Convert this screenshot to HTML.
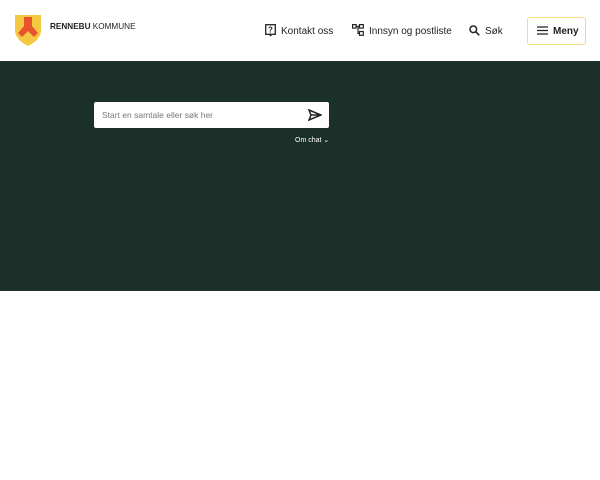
<!DOCTYPE html>
<html><head><style>
body{margin:0;width:600px;height:480px;background:#fff;font-family:"Liberation Sans",sans-serif;position:relative;overflow:hidden}
.hdr{position:absolute;left:0;top:0;width:600px;height:61px;background:#fff}
.dark{position:absolute;left:0;top:61px;width:600px;height:230px;background:#1b3028}
.t{position:absolute;font-size:10px;color:#222;white-space:nowrap}
</style></head><body>
<div class="hdr">
<svg style="position:absolute;left:15px;top:15px" width="26" height="31" viewBox="0 0 26 31">
<path d="M0 0H26V15C26 23 19 28 13 31C7 28 0 23 0 15Z" fill="#f5c842"/>
<path d="M9 2H17V11L23 18L19 22L13 16L7 22L3 18L9 11Z" fill="#e8532d"/>
</svg>
<div class="t" style="left:50px;top:22px;font-size:8.2px;color:#222"><b>RENNEBU</b> KOMMUNE</div>
<svg style="position:absolute;left:265px;top:24px" width="11" height="13" viewBox="0 0 11 13"><rect x="0.7" y="0.7" width="9.6" height="9.6" fill="none" stroke="#222" stroke-width="1.3"/><path d="M4 11L5.5 12.5L7 11" fill="#222"/><text x="5.5" y="8.5" font-size="8" text-anchor="middle" fill="#222" font-family="Liberation Sans" font-weight="bold">?</text></svg>
<div class="t" style="left:281px;top:26px">Kontakt oss</div>
<svg style="position:absolute;left:352px;top:24px" width="12" height="12" viewBox="0 0 12 12" fill="none" stroke="#222" stroke-width="1.2"><rect x="0.6" y="0.6" width="3.5" height="3.5"/><rect x="7.5" y="0.6" width="3.8" height="3.5"/><rect x="7.5" y="7.5" width="3.8" height="3.8"/><path d="M4 2.3H7.5M6 2.3V9.4H7.5"/></svg>
<div class="t" style="left:369px;top:26px">Innsyn og postliste</div>
<svg style="position:absolute;left:469px;top:25px" width="11" height="11" viewBox="0 0 11 11" fill="none" stroke="#222" stroke-width="1.5"><circle cx="4.3" cy="4.3" r="3.3"/><path d="M6.8 6.8L10.3 10.3"/></svg>
<div class="t" style="left:485px;top:26px">Søk</div>
<div style="position:absolute;left:527px;top:17px;width:57px;height:26px;border:1.5px solid #f5dc78;border-radius:3px"></div>
<svg style="position:absolute;left:537px;top:26px" width="11" height="9" viewBox="0 0 11 9" stroke="#222" stroke-width="1.3"><path d="M0 1H11M0 4.5H11M0 8H11"/></svg>
<div class="t" style="left:553px;top:26px;font-weight:bold">Meny</div>
</div>
<div class="dark">
<div style="position:absolute;left:94px;top:41px;width:235px;height:26px;background:#fff;border-radius:2px"></div>
<div class="t" style="left:102px;top:49px;font-size:8.5px;color:#777">Start en samtale eller søk her</div>
<svg style="position:absolute;left:308px;top:48px" width="14" height="12" viewBox="0 0 14 12" fill="none" stroke="#222" stroke-width="1.5"><path d="M1 1L13 6L1 11L3 6Z M3 6H13"/></svg>
<div class="t" style="left:295px;top:75px;font-size:7px;color:#fff">Om chat ⌄</div>
</div>
</body></html>
